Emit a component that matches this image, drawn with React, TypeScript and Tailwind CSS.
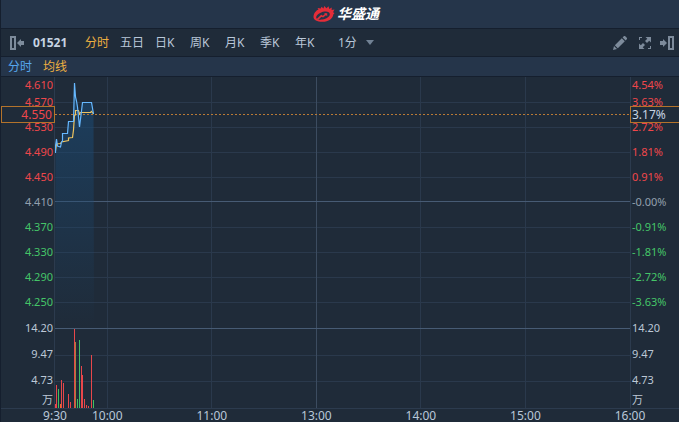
import React from 'react';
import { useState } from 'react'

const periods = ['分时', '五日', '日K', '周K', '月K', '季K', '年K'];

const prices = ['4.610', '4.570', '4.530', '4.490', '4.450', '4.410', '4.370', '4.330', '4.290', '4.250'];
const changes = ['4.54%', '3.63%', '2.72%', '1.81%', '0.91%', '-0.00%', '-0.91%', '-1.81%', '-2.72%', '-3.63%'];
const volumes = ['14.20', '9.47', '4.73'];

// lunch break: 12:00 is not on the axis
const hours = ['10:00', '11:00', '13:00', '14:00', '15:00', '16:00'];

const RED = '#e8474b';
const GREEN = '#3fc062';

// [x, height, colour] of every volume bar
const bars: [number, number, string][] = [
    [0, 4, RED], [1, 23, RED], [3, 19, GREEN], [5, 4, '#e8702a'], [6, 28, RED], [8, 25, RED],
    [13, 14, RED], [15, 6, RED], [19, 79, RED], [20, 66, '#a8823c'], [22, 9, GREEN], [24, 68, GREEN],
    [26, 42, RED], [27, 33, RED], [29, 9, RED], [31, 3, RED], [33, 2, RED], [36, 53, RED], [38, 8, GREEN],
];

const priceLine = '0.5,76 0.5,69 1.5,62 2.5,69 5.5,70 6.5,65 7.5,64 7.5,56.5 12.5,56.5 13.5,44.5 18.5,44.5 19.5,6 20.5,20 21.5,24 22.5,30 23.5,40 24.5,50 25.5,42 26.5,34 27.5,25.5 36.5,25.5 38.5,37';
const averageLine = '0.5,74 1.5,67 5.5,66.5 6.5,65 13.5,63.5 13.5,61 17.5,60.5 18.5,53 19.5,38 20.5,38 20.5,33.5 23.5,33.5 24.5,37 25.5,35.5 35.5,35.5 36.5,34.5 38.5,37';

function tone(index: number) {
    if (index < 5) return 'text-[#f0474b]';
    if (index === 5) return 'text-[#93a0ae]';
    return 'text-[#45c568]';
}

function Axis({ labels, className }: { labels: string[], className: string }) {
    return (
        <ul className={"flex shrink-0 flex-col border-[#2c3b4e] pt-[2px] text-[11px] leading-none " + className}>
            {labels.map((label, i) => (
                <li key={label} className={"flex items-center " + (i === 0 ? 'h-[10px] ' : 'h-[25px] ') + tone(i)}>{label}</li>
            ))}
            {volumes.map(v => (
                <li key={v} className="flex h-[26px] items-center text-[#bcc8d6]">{v}</li>
            ))}
            <li className="flex h-[14px] items-center text-[#bcc8d6]">万</li>
        </ul>
    )
}

function Plot() {
    return (
        <svg className="h-[331px] w-full" viewBox="0 0 575 331" preserveAspectRatio="none">
            <defs>
                <linearGradient id="fill" x1="0" y1="0" x2="0" y2="1">
                    <stop offset="0" stopColor="#1b4a74" stopOpacity="0.65" />
                    <stop offset="1" stopColor="#1b4a74" stopOpacity="0" />
                </linearGradient>
            </defs>
            <g shapeRendering="crispEdges">
                {[25, 50, 75, 100, 150, 175, 200, 225, 278, 304].map(y => (
                    <rect key={y} x="0" y={y} width="575" height="1" fill="#2a394c" />
                ))}
                {[52, 156, 365, 470].map(x => (
                    <rect key={x} x={x} y="0" width="1" height="331" fill="#2a394c" />
                ))}
                <rect x="261" y="0" width="1" height="331" fill="#3c4c60" />
                <rect x="0" y="124" width="575" height="1" fill="#475b74" />
                <rect x="0" y="251" width="575" height="1" fill="#475b74" />
                {bars.map(([x, h, fill]) => (
                    <rect key={x} x={x} y={331 - h} width="1" height={h} fill={fill} />
                ))}
            </g>
            <polygon points={'0,251 ' + priceLine + ' 39,251'} fill="url(#fill)" />
            <line x1="0" y1="37.5" x2="575" y2="37.5" stroke="#b97a35" strokeDasharray="2 2" />
            <polyline points={averageLine} fill="none" stroke="#efc45f" strokeWidth="1.2" />
            <polyline points={priceLine} fill="none" stroke="#66b8ff" strokeWidth="1.2" />
        </svg>
    )
}

function Logo() {
    return (
        <svg className="h-4 w-[22px]" viewBox="0 0 22 16" fill="none">
            <path d="M.5 11C.5 7.500 3 4.500 5.500 3.500L4.500 2 7.800 2.600 8.500.8 10.500 2.400 11.200 0 13.500 2.300 15.500.3 16.300 3 18.800 1.500 18.600 4 21.500 3.500 20 6.200 21.500 7 20.300 8.500C20 12.500 15.500 15.800 9.500 15.800 4 15.800.5 14 .5 11ZM3.300 12C4 13.600 6.500 14 9.500 13.600 13.500 13 16.800 10.800 16.800 8.300 16.800 6 14.500 5.200 11.500 5.600 7 6.200 2.500 9.500 3.300 12Z" fillRule="evenodd" fill="#e52d39" />
            <path d="M4.500 13.300L8.300 9.800 10 10.600 13.300 7.800" stroke="#e52d39" strokeWidth="1.600" />
            <path d="M11 7.200h3.200v3z" fill="#e52d39" />
        </svg>
    )
}

function PanelIcon({ flip }: { flip?: boolean }) {
    return (
        <svg className={"h-[14px] w-[14px] " + (flip ? '-scale-x-100' : '')} viewBox="0 0 14 14">
            <path d="M0 0h6v14H0zM2 2v10h2V2z" fillRule="evenodd" fill="currentColor" />
            <path d="M7 7l4-4v2h3v4h-3v2z" fill="currentColor" />
        </svg>
    )
}

export default function App() {

    const [period, setPeriod] = useState('分时');

    return (
        <div className="flex min-h-screen flex-col border-l border-[#151f2e] bg-[#1f2b39] font-['Noto_Sans','Noto_Sans_CJK_SC',sans-serif] text-xs text-[#b9c7d8]">
            <header className="flex h-7 items-center justify-center gap-[2px] bg-[#25354a] pl-3">
                <Logo />
                <h1 className="text-[14px] leading-none font-bold text-white italic">华盛通</h1>
            </header>

            <nav className="flex h-7 items-center border-t border-[#151f2e] pr-[5px] pl-[9px]">
                <button aria-label="Previous" className="text-[#7d8b9b]"><PanelIcon /></button>
                <span className="ml-[9px] w-[52px] font-bold text-[#c6d3e2]">01521</span>
                {periods.map(p => (
                    <button
                        key={p}
                        onClick={() => setPeriod(p)}
                        className={"w-[35px] text-left " + (p === period ? 'text-[#eeb041]' : '')}
                    >
                        {p}
                    </button>
                ))}
                <button className="ml-2 flex items-center gap-[9px]">
                    1分
                    <svg className="h-[5px] w-2" viewBox="0 0 8 5"><path d="M0 0h8L4 5z" fill="#718294" /></svg>
                </button>
                <div className="ml-auto flex items-center text-[#7d8b9b]">
                    <button aria-label="Draw" className="mr-3">
                        <svg className="h-[14px] w-[14px]" viewBox="0 0 14 14" fill="currentColor">
                            <path d="M0 14l1-4 3 3zM1.800 9.200l7-7 3 3-7 7zM9.600 1.400L11 0h1l2 2v1l-1.400 1.400z" />
                        </svg>
                    </button>
                    <button aria-label="Full screen" className="mr-[9px]">
                        <svg className="h-3 w-3" viewBox="0 0 12 12" fill="currentColor">
                            <path d="M0 0h3v1H1v2H0zM12 12H9v-1h2V9h1zM6.500 0H12v5.500L10.200 3.700 8 6 6 4l2.300-2.200zM5.500 12H0V6.500l1.800 1.800L4 6l2 2-2.300 2.200z" />
                        </svg>
                    </button>
                    <button aria-label="Next"><PanelIcon flip /></button>
                </div>
            </nav>

            <div className="flex h-5 items-center gap-[11px] border-t border-[#151f2e] bg-[#25354a] pl-[7px]">
                <span className="text-[#56a7ee]">分时</span>
                <span className="text-[#eeb041]">均线</span>
            </div>

            <main className="relative flex border-t border-[#151f2e]">
                <Axis labels={prices} className="w-[54px] items-end border-r pr-[1px]" />
                <div className="min-w-0 flex-1"><Plot /></div>
                <Axis labels={changes} className="w-[49px] border-l pl-[1px]" />

                {/* current price tags */}
                <div className="absolute top-[29px] left-0 flex h-[17px] w-[54px] items-center justify-end border border-[#b3732b] bg-[#1f2b39] pr-[2px] text-[#f0474b]">4.550</div>
                <div className="absolute top-[29px] right-0 flex h-[17px] w-[49px] items-center border border-r-0 border-[#b3732b] bg-[#1f2b39] pl-[1px] text-[#c6d3e2]">3.17%</div>
            </main>

            <footer className="flex h-[14px] items-center border-t border-[#2c3b4e] pr-[49px] pl-[54px] leading-none">
                <span className="flex w-0 justify-center">9:30</span>
                {hours.map((h, i) => (
                    <React.Fragment key={h}>
                        <div className={i === 0 ? 'grow' : 'grow-2'}></div>
                        <span className="flex w-0 justify-center">{h}</span>
                    </React.Fragment>
                ))}
            </footer>
        </div>
    )
}
